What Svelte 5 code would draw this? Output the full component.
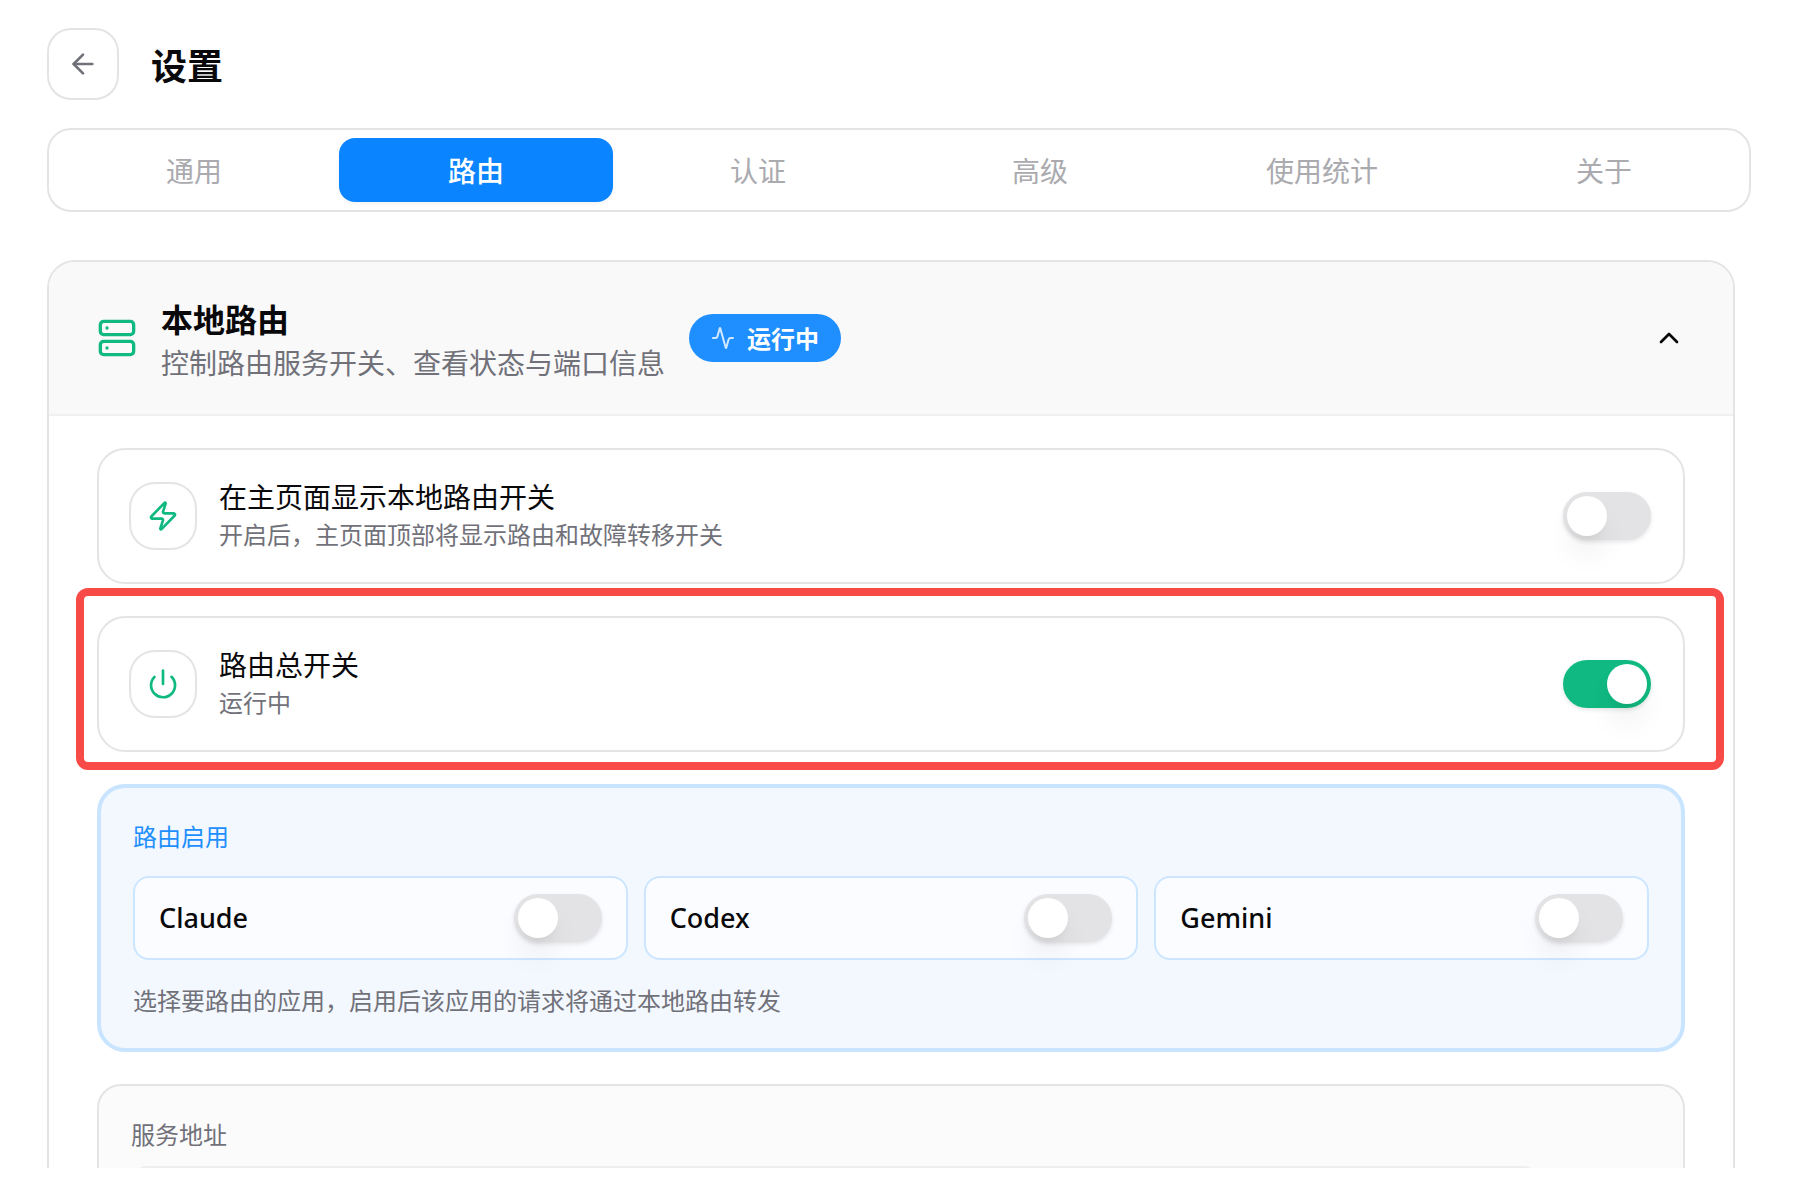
<script>
  const tabs = ['通用', '路由', '认证', '高级', '使用统计', '关于'];

  let activeTab = $state('路由');
  let expanded = $state(true);
  let showOnHome = $state(false);
  let routerOn = $state(true);
  let address = $state('http://127.0.0.1:15721');
  let apps = $state([
    { id: 'claude', name: 'Claude', enabled: false },
    { id: 'codex', name: 'Codex', enabled: false },
    { id: 'gemini', name: 'Gemini', enabled: false }
  ]);
</script>

<div class="page">
  <header class="top">
    <button class="back" aria-label="返回">
      <svg class="icon" viewBox="0 0 24 24" width="32" height="32">
        <path d="m12 19-7-7 7-7" />
        <path d="M19 12H5" />
      </svg>
    </button>
    <h1>设置</h1>
  </header>

  <nav class="tabs">
    {#each tabs as tab}
      <button class="tab" class:active={tab === activeTab} onclick={() => (activeTab = tab)}>{tab}</button>
    {/each}
  </nav>

  <main class="content">
    <section class="panel">
      <button class="panel-head" aria-expanded={expanded} onclick={() => (expanded = !expanded)}>
        <svg class="icon green" viewBox="0 0 24 24" width="40" height="40">
          <rect width="20" height="8" x="2" y="2" rx="2" ry="2" />
          <rect width="20" height="8" x="2" y="14" rx="2" ry="2" />
          <path d="M6 6h.01M6 18h.01" />
        </svg>
        <span class="panel-text">
          <span class="panel-title">本地路由</span>
          <span class="panel-desc">控制路由服务开关、查看状态与端口信息</span>
        </span>
        <span class="badge">
          <svg class="icon pulse" viewBox="0 0 24 24" width="24" height="24">
            <path d="M22 12h-2.48a2 2 0 0 0-1.93 1.46l-2.35 8.36a.25.25 0 0 1-.48 0L9.24 2.18a.25.25 0 0 0-.48 0l-2.35 8.36A2 2 0 0 1 4.49 12H2" />
          </svg>
          运行中
        </span>
        <svg class="icon chevron" class:closed={!expanded} viewBox="0 0 24 24" width="32" height="32">
          <path d="m18 15-6-6-6 6" />
        </svg>
      </button>

      {#if expanded}
        <div class="panel-body">
          <div class="row">
            <span class="row-icon">
              <svg class="icon green" viewBox="0 0 24 24" width="32" height="32">
                <path d="M4 14a1 1 0 0 1-.78-1.63l9.9-10.2a.5.5 0 0 1 .86.46l-1.92 6.02A1 1 0 0 0 13 10h7a1 1 0 0 1 .78 1.63l-9.9 10.2a.5.5 0 0 1-.86-.46l1.92-6.02A1 1 0 0 0 11 14z" />
              </svg>
            </span>
            <label class="row-text" for="show-home">
              <span class="row-title">在主页面显示本地路由开关</span>
              <span class="row-desc">开启后，主页面顶部将显示路由和故障转移开关</span>
            </label>
            <input id="show-home" class="switch" type="checkbox" role="switch" bind:checked={showOnHome} />
          </div>

          <div class="row marked">
            <span class="row-icon">
              <svg class="icon green" viewBox="0 0 24 24" width="32" height="32">
                <path d="M12 2v10" />
                <path d="M18.4 6.6a9 9 0 1 1-12.77.04" />
              </svg>
            </span>
            <label class="row-text" for="router-on">
              <span class="row-title">路由总开关</span>
              <span class="row-desc">运行中</span>
            </label>
            <input id="router-on" class="switch" type="checkbox" role="switch" bind:checked={routerOn} />
          </div>

          <div class="takeover">
            <p class="takeover-title">路由启用</p>
            <div class="apps">
              {#each apps as app (app.id)}
                <div class="app">
                  <label class="app-name" for={app.id}>{app.name}</label>
                  <input id={app.id} class="switch" type="checkbox" role="switch" bind:checked={app.enabled} />
                </div>
              {/each}
            </div>
            <p class="hint">选择要路由的应用，启用后该应用的请求将通过本地路由转发</p>
          </div>

          <div class="service">
            <label class="service-label" for="address">服务地址</label>
            <input id="address" class="address" type="text" readonly value={address} />
          </div>
        </div>
      {/if}
    </section>
  </main>
</div>

<style>
  :global(body) {
    margin: 0;
    background: #fff;
  }

  .page {
    box-sizing: border-box;
    display: flex;
    flex-direction: column;
    height: 100vh;
    padding: 28px 47px 32px;
    color: #09090b;
    font-family: "Noto Sans CJK SC", "Noto Sans", sans-serif;
  }

  .page * {
    box-sizing: border-box;
  }

  button {
    font: inherit;
    color: inherit;
    cursor: pointer;
  }

  h1,
  p {
    margin: 0;
  }

  .icon {
    flex: none;
    fill: none;
    stroke: currentColor;
    stroke-width: 2;
    stroke-linecap: round;
    stroke-linejoin: round;
  }

  .green {
    color: #10b981;
  }

  .top {
    display: flex;
    align-items: center;
    gap: 32px;
    margin-bottom: 28px;
  }

  .back {
    display: flex;
    align-items: center;
    justify-content: center;
    width: 72px;
    height: 72px;
    padding: 0;
    border: 2px solid #e4e4e5;
    border-radius: 24px;
    background: #fff;
    color: #71717a;
  }

  h1 {
    font-size: 36px;
    line-height: 56px;
    font-weight: 700;
  }

  .tabs {
    display: flex;
    flex: none;
    gap: 8px;
    padding: 8px;
    margin-bottom: 48px;
    border: 2px solid #e4e4e5;
    border-radius: 24px;
  }

  .tab {
    flex: 1;
    height: 64px;
    padding: 0;
    border: 0;
    border-radius: 16px;
    background: none;
    color: #aaaaaf;
    font-size: 28px;
    line-height: 40px;
  }

  .tab.active {
    background: #0a84ff;
    color: #fff;
    font-weight: 500;
    box-shadow: 0 2px 4px rgba(0, 0, 0, 0.05);
  }

  .content {
    flex: 1;
    min-height: 0;
    padding-right: 16px;
    overflow: hidden;
  }

  .panel {
    border: 2px solid #e4e4e5;
    border-radius: 28px;
    overflow: hidden;
  }

  .panel-head {
    display: flex;
    align-items: center;
    gap: 24px;
    width: 100%;
    padding: 30px 48px;
    border: 0;
    border-bottom: 2px solid #f0f0f0;
    background: #f9f9f9;
    text-align: left;
  }

  .panel-text,
  .row-text {
    display: flex;
    flex-direction: column;
  }

  .panel-text {
    padding-top: 4px;
  }

  .panel-title {
    font-size: 32px;
    line-height: 44px;
    font-weight: 700;
  }

  .panel-desc {
    color: #71717a;
    font-size: 28px;
    line-height: 44px;
  }

  .badge {
    display: flex;
    align-items: center;
    gap: 12px;
    height: 48px;
    padding: 0 22px;
    border-radius: 24px;
    background: #1f8fff;
    color: #fff;
    font-size: 24px;
    line-height: 32px;
    font-weight: 700;
  }

  .pulse {
    opacity: 0.8;
  }

  .chevron {
    margin-left: auto;
  }

  .chevron.closed {
    transform: rotate(180deg);
  }

  .panel-body {
    display: flex;
    flex-direction: column;
    gap: 32px;
    padding: 32px 48px;
  }

  .row {
    position: relative;
    display: flex;
    align-items: center;
    gap: 24px;
    height: 136px;
    padding: 0 32px;
    border: 2px solid #e4e4e5;
    border-radius: 28px;
  }

  /* red frame drawn over the row, wider than the row itself */
  .marked::after {
    content: '';
    position: absolute;
    inset: -30px -41px -20px -23px;
    border: 8px solid #f84b47;
    border-radius: 12px;
    pointer-events: none;
  }

  .row-icon {
    display: flex;
    align-items: center;
    justify-content: center;
    width: 64px;
    height: 64px;
    border-radius: 24px;
    box-shadow: 0 0 0 2px #e4e4e5;
  }

  .row-text {
    flex: 1;
    padding-bottom: 4px;
  }

  .row-title {
    font-size: 28px;
    line-height: 40px;
  }

  .row-desc {
    color: #71717a;
    font-size: 24px;
    line-height: 36px;
  }

  .switch {
    appearance: none;
    flex: none;
    width: 88px;
    height: 48px;
    margin: 0;
    padding: 4px;
    border-radius: 24px;
    background: #e3e3e5;
    box-shadow: 0 2px 4px rgba(0, 0, 0, 0.1);
    cursor: pointer;
  }

  .switch::before {
    content: '';
    display: block;
    width: 40px;
    height: 40px;
    border-radius: 50%;
    background: #fff;
    box-shadow: 0 20px 30px -6px rgba(0, 0, 0, 0.1), 0 8px 12px -8px rgba(0, 0, 0, 0.1);
    transition: margin 0.2s;
  }

  .switch:checked {
    background: #10b981;
  }

  .switch:checked::before {
    margin-left: 40px;
  }

  .takeover {
    display: flex;
    flex-direction: column;
    gap: 24px;
    padding: 32px;
    border: 4px solid #c8e4ff;
    border-radius: 28px;
    background: #f3f8ff;
    font-size: 24px;
    line-height: 32px;
  }

  .takeover-title {
    color: #1f8fff;
  }

  .apps {
    display: grid;
    grid-template-columns: repeat(3, 1fr);
    gap: 16px;
  }

  .app {
    display: flex;
    align-items: center;
    justify-content: space-between;
    height: 84px;
    padding: 0 24px;
    border: 2px solid #cce6ff;
    border-radius: 16px;
    background: #fbfcff;
  }

  .app-name {
    font-family: "Noto Sans", "Open Sans", sans-serif;
    font-size: 27px;
    line-height: 40px;
    font-weight: 500;
  }

  .hint {
    color: #71717a;
  }

  .service {
    display: flex;
    flex-direction: column;
    gap: 16px;
    padding: 32px;
    border: 2px solid #e4e4e5;
    border-radius: 24px;
    background: #fbfbfb;
  }

  .service-label {
    color: #71717a;
    font-size: 24px;
    line-height: 32px;
  }

  .address {
    height: 72px;
    margin-right: 112px;
    padding: 0 24px;
    border: 2px solid #eeeeef;
    border-radius: 16px;
    background: #fff;
    font-family: "Liberation Mono", monospace;
    font-size: 24px;
  }
</style>
